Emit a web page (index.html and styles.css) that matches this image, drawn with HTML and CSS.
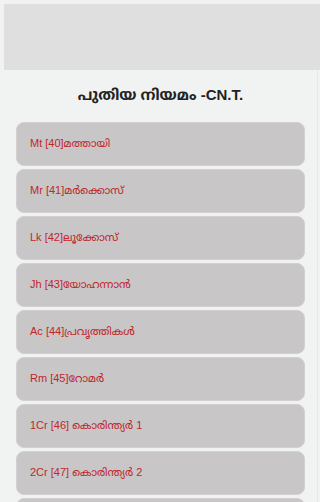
FILE: index.html
```html
<!DOCTYPE html>
<html lang="ml">
<head>
<meta charset="utf-8">
<title>പുതിയ നിയമം</title>
<link rel="stylesheet" href="styles.css">
</head>
<body>
<div class="banner"></div>
<div class="page">
  <h1 class="title">പുതിയ നിയമം -CN.T.</h1>
  <ul class="books">
    <li class="book">Mt [40]മത്തായി</li>
    <li class="book">Mr [41]മർക്കൊസ്</li>
    <li class="book">Lk [42]ലൂക്കോസ്</li>
    <li class="book">Jh [43]യോഹന്നാൻ</li>
    <li class="book">Ac [44]പ്രവൃത്തികൾ</li>
    <li class="book">Rm [45]റോമർ</li>
    <li class="book">1Cr [46] കൊരിന്ത്യർ 1</li>
    <li class="book">2Cr [47] കൊരിന്ത്യർ 2</li>
    <li class="book book-next"></li>
  </ul>
</div>
</body>
</html>
```

FILE: styles.css
```css
html, body {
  margin: 0;
  padding: 0;
}
body {
  background: #f1f2f2;
  padding: 4px 0 0 4px;
  font-family: "Liberation Sans", "Noto Sans Malayalam", "Noto Sans", sans-serif;
  overflow: hidden;
  height: 498px;
}
.banner {
  height: 66px;
  background: #dfdfdf;
}
.page {
  width: 314px;
  box-sizing: border-box;
  border-right: 1px solid #e6e7e7;
  padding: 0 12px;
}
.title {
  margin: 0;
  height: 52px;
  display: flex;
  align-items: center;
  justify-content: center;
  font-size: 15px;
  font-weight: bold;
  color: #222;
}
.books {
  list-style: none;
  margin: 0;
  padding: 0;
  display: flex;
  flex-direction: column;
  gap: 3px;
}
.book {
  height: 44px;
  box-sizing: border-box;
  background: #c8c6c7;
  border: 1px solid #d2d0d1;
  border-radius: 8px;
  display: flex;
  align-items: center;
  padding-left: 13px;
  font-size: 11px;
  color: #bf262c;
}
```
